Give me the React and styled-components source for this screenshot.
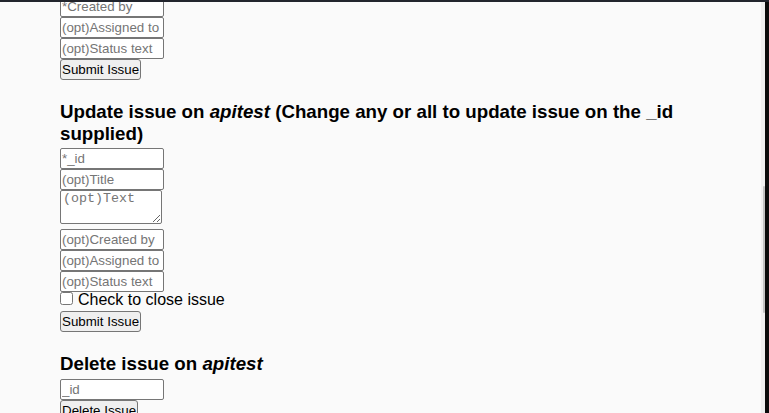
import React from "react";
import styled, { createGlobalStyle } from "styled-components";

const Global = createGlobalStyle`
  html, body { margin: 0; padding: 0; background: #0b0b0b; }
  body { font-family: "Liberation Sans", Arial, sans-serif; }
  * { box-sizing: border-box; }
`;

const Frame = styled.div`
  width: 769px;
  height: 413px;
  display: flex;
  flex-direction: column;
  background: #0b0b0b;
  overflow: hidden;
`;

const TopBar = styled.div`
  flex: none;
  height: 2px;
  background: #22252d;
`;

const Body = styled.div`
  flex: 1;
  min-height: 0;
  display: flex;
`;

const Viewport = styled.main`
  flex: 1;
  overflow: hidden;
  background: #fafafa;
  padding: 0 20px 0 60px;
`;

const Track = styled.div`
  flex: none;
  position: relative;
  width: 4px;
  background: #efefef;
`;

const Thumb = styled.div`
  position: absolute;
  right: 0;
  top: 184px;
  width: 2px;
  height: 127px;
  background: #c3c3c3;
  border-radius: 1px;
`;

const Edge = styled.div`
  flex: none;
  width: 4px;
  background: #0b0b0b;
`;

const Form = styled.form`
  display: flex;
  flex-direction: column;
  align-items: flex-start;
  margin-top: ${(p) => p.$offset || 0}px;
`;

const Heading = styled.h3`
  margin: 21px 0 4px;
  font-size: 18.72px;
  line-height: 21.5px;
  font-weight: bold;
  color: #000;
`;

const Field = styled.input`
  width: 104px;
  height: 21px;
  margin: 0;
  padding: 0 1px;
  border: 1px solid #767676;
  border-radius: 2px;
  background: #fff;
  font-family: "Liberation Sans", Arial, sans-serif;
  font-size: 13.33px;
  color: #000;
  &::placeholder { color: #757575; }
`;

const TextBox = styled.textarea`
  width: 102px;
  height: 34px;
  margin: 0 0 5px;
  padding: 0 2px;
  border: 1px solid #767676;
  border-radius: 2px;
  background: #fff;
  font-family: "Liberation Mono", "Courier New", monospace;
  font-size: 13.33px;
  line-height: 15px;
  &::placeholder { color: #757575; }
`;

const CheckRow = styled.label`
  display: flex;
  align-items: flex-start;
  height: 19px;
  font-size: 16px;
  line-height: 15px;
  color: #000;
`;

const Check = styled.input`
  width: 13px;
  height: 13px;
  margin: 0 5px 0 0;
`;

const CheckText = styled.span`
  display: block;
`;

const Button = styled.button`
  height: 21px;
  margin: 0;
  padding: 1px 1px;
  border: 1px solid #767676;
  border-radius: 3px;
  background: #efefef;
  color: #000;
  font-family: "Liberation Sans", Arial, sans-serif;
  font-size: 13.33px;
  line-height: 15px;
`;

export default function App() {
  return (
    <>
      <Global />
      <Frame>
        <TopBar />
        <Body>
          <Viewport>
            <Form $offset={-6}>
              <Field type="text" placeholder="*Created by" />
              <Field type="text" placeholder="(opt)Assigned to" />
              <Field type="text" placeholder="(opt)Status text" />
              <Button type="button">Submit Issue</Button>
            </Form>
            <Form>
              <Heading>
                Update issue on <i>apitest</i> (Change any or all to update issue on the _id supplied)
              </Heading>
              <Field type="text" placeholder="*_id" />
              <Field type="text" placeholder="(opt)Title" />
              <TextBox placeholder="(opt)Text" />
              <Field type="text" placeholder="(opt)Created by" />
              <Field type="text" placeholder="(opt)Assigned to" />
              <Field type="text" placeholder="(opt)Status text" />
              <CheckRow>
                <Check type="checkbox" />
                <CheckText>Check to close issue</CheckText>
              </CheckRow>
              <Button type="button">Submit Issue</Button>
            </Form>
            <Form>
              <Heading>
                Delete issue on <i>apitest</i>
              </Heading>
              <Field type="text" placeholder="_id" />
              <Button type="button">Delete Issue</Button>
            </Form>
          </Viewport>
          <Track>
            <Thumb />
          </Track>
          <Edge />
        </Body>
      </Frame>
    </>
  );
}
